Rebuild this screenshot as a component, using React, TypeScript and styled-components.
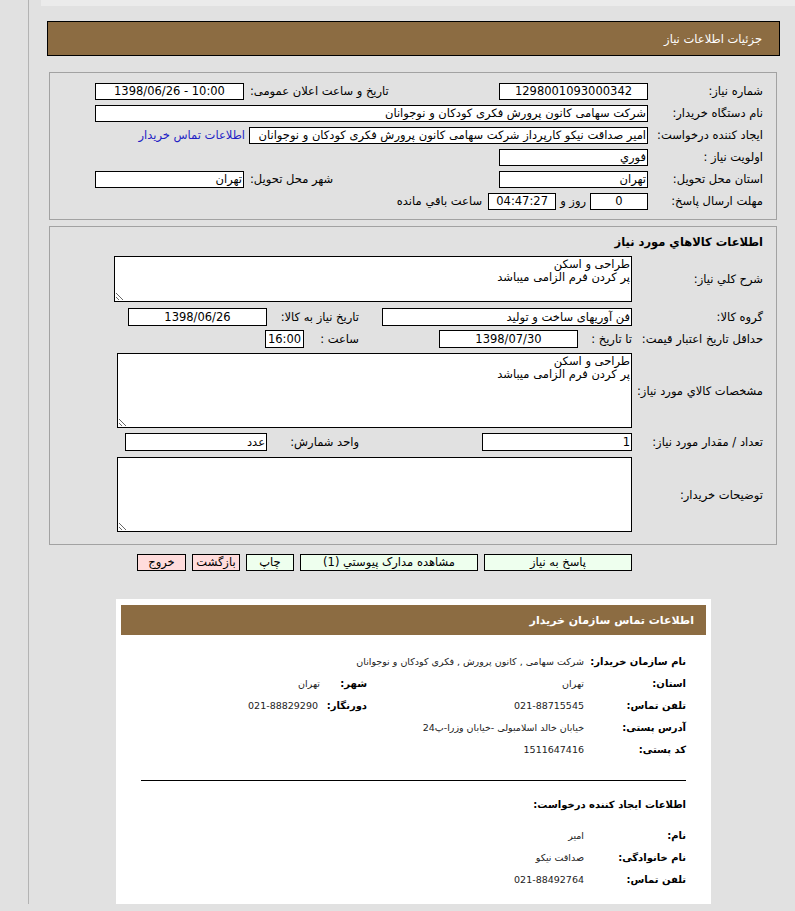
import styled, { createGlobalStyle } from "styled-components";

const GlobalStyle = createGlobalStyle`
  html, body {
    margin: 0;
    padding: 0;
    background: #e1e1e1;
  }
  body {
    font-family: "DejaVu Sans", sans-serif;
    font-size: 11.5px;
    color: #000;
  }
  * {
    box-sizing: border-box;
  }
`;

const brown = "#8c6c42";

const Page = styled.div`
  direction: rtl;
  margin-left: 28px;
  border-left: 1px solid #b3b3b3;
  padding: 21px 15px 0 18px;
  background: linear-gradient(#ebebeb, #ebebeb) 12px 0 / 100% 6px no-repeat;
`;

const TitleBar = styled.div`
  height: 35px;
  border: 1px solid #000;
  background: ${brown};
  color: #fff;
  display: flex;
  align-items: center;
  padding-right: 17px;
`;

const Panel = styled.div<{ $top: number; $pt: number; $pb: number }>`
  margin: ${(p) => p.$top}px 3px 0 2px;
  border: 1px solid #a2a2a2;
  padding: ${(p) => p.$pt}px 13px ${(p) => p.$pb}px 0;
`;

const PanelTitle = styled.div`
  height: 20px;
  line-height: 20px;
  font-weight: bold;
`;

const Row = styled.div<{ $h?: number; $mt?: number }>`
  display: flex;
  align-items: center;
  height: ${(p) => (p.$h ? `${p.$h}px` : "auto")};
  margin-top: ${(p) => p.$mt ?? 0}px;
`;

const Label = styled.span<{ $w?: number; $left?: boolean; $pl?: number; $mx?: number }>`
  flex: none;
  width: ${(p) => (p.$w ? `${p.$w}px` : "auto")};
  text-align: ${(p) => (p.$left ? "left" : "right")};
  padding-left: ${(p) => p.$pl ?? 0}px;
  margin: 0 ${(p) => p.$mx ?? 0}px;
  white-space: nowrap;
`;

const Slot = styled.div<{ $w: number }>`
  flex: none;
  width: ${(p) => p.$w}px;
  display: flex;
  align-items: center;
`;

const Field = styled.input<{ $w: number; $h?: number; $center?: boolean }>`
  flex: none;
  width: ${(p) => p.$w}px;
  height: ${(p) => p.$h ?? 17}px;
  margin: 0;
  padding: 0 1px;
  border: 1px solid #000;
  background: #fff;
  font: inherit;
  color: #000;
  text-align: ${(p) => (p.$center ? "center" : "right")};
  outline: none;
`;

const Area = styled.textarea<{ $w: number; $h: number }>`
  flex: none;
  display: block;
  width: ${(p) => p.$w}px;
  height: ${(p) => p.$h}px;
  margin: 0;
  padding: 1px 1px;
  border: 1px solid #000;
  background: #fff;
  font: inherit;
  line-height: 13px;
  color: #000;
  direction: rtl;
  resize: both;
  overflow: hidden;
  outline: none;
`;

const Link = styled.a`
  margin-right: 4px;
  color: #2121c4;
  text-decoration: none;
  white-space: nowrap;
  cursor: pointer;
`;

const Buttons = styled.div`
  display: flex;
  gap: 6px;
  margin: 9px 148px 0 0;
`;

const Btn = styled.button<{ $w: number; $pink?: boolean }>`
  flex: none;
  width: ${(p) => p.$w}px;
  height: 17px;
  padding: 0;
  border: 1px solid #000;
  background: ${(p) => (p.$pink ? "#ffdcdc" : "#eeffee")};
  font: inherit;
  line-height: 15px;
  color: #000;
  white-space: nowrap;
  overflow: hidden;
  cursor: pointer;
`;

const ContactBox = styled.div`
  margin: 28px 69px 0 69px;
  background: #fff;
  padding: 6px 5px 14px;
`;

const ContactHead = styled.div`
  height: 30px;
  background: ${brown};
  color: #fff;
  font-weight: bold;
  font-size: 11px;
  display: flex;
  align-items: center;
  padding-right: 12px;
`;

const ContactBody = styled.div`
  padding: 15px 20px 0;
`;

const CRow = styled.div<{ $mt?: number }>`
  display: flex;
  align-items: center;
  height: 22px;
  margin-top: ${(p) => p.$mt ?? 0}px;
`;

const CLabel = styled.span<{ $w: number }>`
  flex: none;
  width: ${(p) => p.$w}px;
  font-weight: bold;
  font-size: 10px;
  white-space: nowrap;
`;

const CValue = styled.span<{ $w?: number }>`
  flex: none;
  width: ${(p) => (p.$w ? `${p.$w}px` : "auto")};
  font-size: 9.5px;
  color: #222;
  white-space: nowrap;
`;

const Rule = styled.div`
  border-top: 1px solid #000;
  margin-top: 20px;
`;

const CTitle = styled.div`
  margin-top: 15px;
  height: 18px;
  line-height: 18px;
  font-weight: bold;
  font-size: 10px;
`;

export default function App() {
  return (
    <>
      <GlobalStyle />
      <Page>
        <TitleBar>جزئیات اطلاعات نیاز</TitleBar>

        <Panel $top={16} $pt={7} $pb={7}>
          <Row $h={22}>
            <Label $w={115}>شماره نیاز:</Label>
            <Field $w={149} $center dir="ltr" readOnly value="1298001093000342" />
            <Label $w={255} $left $pl={6}>تاریخ و ساعت اعلان عمومی:</Label>
            <Field $w={149} $center dir="ltr" readOnly value="1398/06/26 - 10:00" />
          </Row>
          <Row $h={22}>
            <Label $w={115}>نام دستگاه خریدار:</Label>
            <Field $w={553} readOnly value="شرکت سهامی کانون پرورش فکری کودکان و نوجوانان" />
          </Row>
          <Row $h={22}>
            <Label $w={115}>ایجاد کننده درخواست:</Label>
            <Field
              $w={399}
              readOnly
              value="امیر صداقت نیکو کارپرداز شرکت سهامی کانون پرورش فکری کودکان و نوجوانان"
            />
            <Link>اطلاعات تماس خریدار</Link>
          </Row>
          <Row $h={22}>
            <Label $w={115}>اولویت نیاز :</Label>
            <Field $w={149} readOnly value="فوري" />
          </Row>
          <Row $h={22}>
            <Label $w={115}>استان محل تحویل:</Label>
            <Field $w={149} readOnly value="تهران" />
            <Label $w={255} $left $pl={6}>شهر محل تحویل:</Label>
            <Field $w={149} readOnly value="تهران" />
          </Row>
          <Row $h={22}>
            <Label $w={115}>مهلت ارسال پاسخ:</Label>
            <Field $w={58} $center readOnly value="0" />
            <Label $mx={4}>روز و</Label>
            <Field $w={68} $center dir="ltr" readOnly value="04:47:27" />
            <Label $mx={6}>ساعت باقي مانده</Label>
          </Row>
        </Panel>

        <Panel $top={6} $pt={5} $pb={12}>
          <PanelTitle>اطلاعات کالاهاي مورد نياز</PanelTitle>
          <Row $mt={4}>
            <Label $w={131}>شرح کلي نياز:</Label>
            <Area $w={518} $h={46} readOnly value={"طراحی و اسکن\nپر کردن فرم الزامی میباشد"} />
          </Row>
          <Row $h={18} $mt={6}>
            <Label $w={131}>گروه کالا:</Label>
            <Slot $w={273}>
              <Field $w={250} $h={18} readOnly value="فن آوریهای ساخت و تولید" />
            </Slot>
            <Label $w={92}>تاریخ نیاز به کالا:</Label>
            <Field $w={139} $h={18} $center dir="ltr" readOnly value="1398/06/26" />
          </Row>
          <Row $h={18} $mt={4}>
            <Label $w={131}>حداقل تاریخ اعتبار قیمت:</Label>
            <Slot $w={273}>
              <Label $w={54}>تا تاریخ :</Label>
              <Field $w={139} $h={18} $center dir="ltr" readOnly value="1398/07/30" />
            </Slot>
            <Label $w={55}>ساعت :</Label>
            <Field $w={39} $h={18} $center dir="ltr" readOnly value="16:00" />
          </Row>
          <Row $mt={5}>
            <Label $w={131}>مشخصات کالاي مورد نياز:</Label>
            <Area $w={515} $h={75} readOnly value={"طراحی و اسکن\nپر کردن فرم الزامی میباشد"} />
          </Row>
          <Row $h={18} $mt={5}>
            <Label $w={131}>تعداد / مقدار مورد نياز:</Label>
            <Slot $w={273}>
              <Field $w={150} $h={18} readOnly value="1" />
            </Slot>
            <Label $w={92}>واحد شمارش:</Label>
            <Field $w={142} $h={18} readOnly value="عدد" />
          </Row>
          <Row $mt={6}>
            <Label $w={131}>توضیحات خریدار:</Label>
            <Area $w={515} $h={75} readOnly value="" />
          </Row>
        </Panel>

        <Buttons>
          <Btn $w={148}>پاسخ به نیاز</Btn>
          <Btn $w={178}>مشاهده مدارک پیوستي (1)</Btn>
          <Btn $w={48}>چاپ</Btn>
          <Btn $w={48} $pink>بازگشت</Btn>
          <Btn $w={49} $pink>خروج</Btn>
        </Buttons>

        <ContactBox>
          <ContactHead>اطلاعات تماس سازمان خریدار</ContactHead>
          <ContactBody>
            <CRow>
              <CLabel $w={102}>نام سازمان خریدار:</CLabel>
              <CValue>شرکت سهامی , کانون پرورش , فکری کودکان و نوجوانان</CValue>
            </CRow>
            <CRow>
              <CLabel $w={102}>استان:</CLabel>
              <CValue $w={217}>تهران</CValue>
              <CLabel $w={47}>شهر:</CLabel>
              <CValue>تهران</CValue>
            </CRow>
            <CRow>
              <CLabel $w={102}>تلفن تماس:</CLabel>
              <CValue $w={217}>021-88715545</CValue>
              <CLabel $w={49}>دورنگار:</CLabel>
              <CValue>021-88829290</CValue>
            </CRow>
            <CRow>
              <CLabel $w={102}>آدرس پستی:</CLabel>
              <CValue>خیابان خالد اسلامبولی -خیابان وزرا-پ24</CValue>
            </CRow>
            <CRow>
              <CLabel $w={102}>کد پستی:</CLabel>
              <CValue>1511647416</CValue>
            </CRow>
            <Rule />
            <CTitle>اطلاعات ایجاد کننده درخواست:</CTitle>
            <CRow $mt={10}>
              <CLabel $w={102}>نام:</CLabel>
              <CValue>امیر</CValue>
            </CRow>
            <CRow>
              <CLabel $w={102}>نام خانوادگی:</CLabel>
              <CValue>صداقت نیکو</CValue>
            </CRow>
            <CRow>
              <CLabel $w={102}>تلفن تماس:</CLabel>
              <CValue>021-88492764</CValue>
            </CRow>
          </ContactBody>
        </ContactBox>
      </Page>
    </>
  );
}
